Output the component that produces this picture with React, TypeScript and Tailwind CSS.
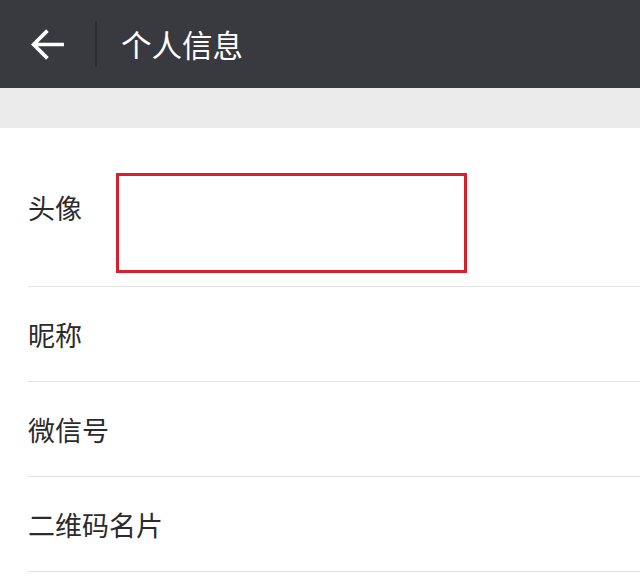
import React from "react";

const rows = ["昵称", "微信号", "二维码名片"];

export default function App() {
  return (
    <div
      className="w-[640px] min-h-[587px] bg-white"
      style={{ fontFamily: '"Noto Sans CJK SC", "Noto Sans", sans-serif' }}
    >
      <div className="h-[88px] bg-[#393a3f] flex items-center">
        <div className="w-[95px] flex items-center justify-start pl-[31px]">
          <svg width="35" height="35" viewBox="0 0 34 34" fill="none">
            <path
              d="M32 17H3M16 3.5L2.5 17L16 30.5"
              stroke="white"
              strokeWidth="3.6"
              strokeLinecap="butt"
              strokeLinejoin="miter"
            />
          </svg>
        </div>
        <div className="w-[2px] h-[46px] bg-[#2c2d31]" />
        <div className="pl-[24px] text-[30.5px] leading-none text-white">个人信息</div>
      </div>
      <div className="h-[40px] bg-[#ebebeb]" />
      <div className="pl-[28px]">
        <div className="relative h-[159px] border-b border-[#e3e3e3] flex items-center">
          <span className="text-[27px] leading-none text-[#2b2b2b]">头像</span>
          <div className="absolute left-[88px] top-[45px] w-[351px] h-[100px] border-[3px] border-[#d7202e]" />
        </div>
        {rows.map((r) => (
          <div
            key={r}
            className="h-[95px] border-b border-[#e3e3e3] flex items-center"
          >
            <span className="text-[27px] leading-none text-[#2b2b2b]">{r}</span>
          </div>
        ))}
      </div>
    </div>
  );
}
